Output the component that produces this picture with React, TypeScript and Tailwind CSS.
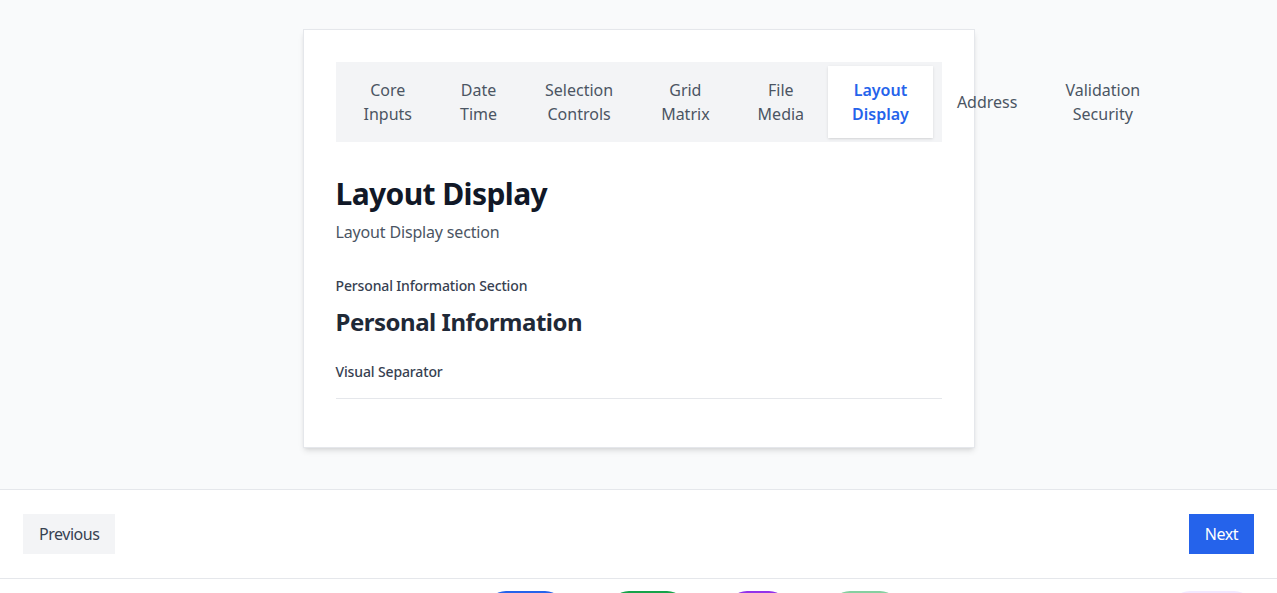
export default function App() {
  const tabs = [
    ['Core', 'Inputs'],
    ['Date', 'Time'],
    ['Selection', 'Controls'],
    ['Grid', 'Matrix'],
    ['File', 'Media'],
    ['Layout', 'Display'],
    ['Address'],
    ['Validation', 'Security'],
  ];
  const active = 5;

  return (
    <div className="min-h-screen bg-white font-['Noto_Sans',sans-serif]">
      {/* Form area */}
      <main className="bg-[#f9fafb] px-4 pt-[29px] pb-[41px]">
        <div className="mx-auto max-w-2xl border border-[#e5e7eb] bg-white p-8 shadow-md">
          <div className="flex w-full bg-[#f3f4f6] p-1">
            {tabs.map((t, i) => (
              <button
                key={i}
                className={
                  i === active
                    ? 'bg-white px-6 py-3 text-base leading-6 font-semibold text-[#2563eb] shadow-sm'
                    : 'px-6 py-3 text-base leading-6 text-[#4b5563]'
                }
              >
                {t.map((w, j) => (
                  <span key={j} className="block">
                    {w}
                  </span>
                ))}
              </button>
            ))}
          </div>

          <h2 className="mt-[34px] text-3xl leading-9 font-bold tracking-[-0.02em] text-[#111827]">Layout Display</h2>
          <p className="mt-2 text-base leading-6 tracking-[-0.01em] text-[#4b5563]">Layout Display section</p>

          <div className="mt-8">
            <p className="text-sm leading-5 font-medium tracking-[-0.01em] text-[#374151]">Personal Information Section</p>
            <h3 className="mt-[10px] text-2xl leading-8 font-bold tracking-[-0.02em] text-[#1f2937]">Personal Information</h3>
          </div>

          <div className="mt-6">
            <p className="text-sm leading-5 font-medium tracking-[-0.01em] text-[#374151]">Visual Separator</p>
            <hr className="my-4 border-[#e5e7eb]" />
          </div>
        </div>
      </main>

      {/* Navigation */}
      <div className="flex items-center justify-between border-t border-[#e5e7eb] bg-white px-[23px] py-6">
        <button className="bg-[#f3f4f6] px-4 py-2 text-base leading-6 tracking-[-0.03em] text-[#374151]">Previous</button>
        <button className="bg-[#2563eb] px-4 py-2 text-base leading-6 tracking-[-0.03em] text-white">Next</button>
      </div>

      {/* Actions */}
      <div className="flex items-start border-t border-[#e5e7eb] bg-white pt-3">
        <div className="ml-[486px] h-10 w-[79px] rounded-full bg-[#2563eb]" />
        <div className="ml-[44px] h-10 w-[78px] rounded-full bg-[#16a34a]" />
        <div className="ml-[40px] h-10 w-[62px] rounded-full bg-[#9333ea]" />
        <div className="ml-[41px] h-10 w-[70px] rounded-full bg-[#86cfa0]" />
        <div className="ml-auto mr-[23px] h-10 w-[84px] rounded-full bg-[#f3e8ff]" />
      </div>
    </div>
  );
}
